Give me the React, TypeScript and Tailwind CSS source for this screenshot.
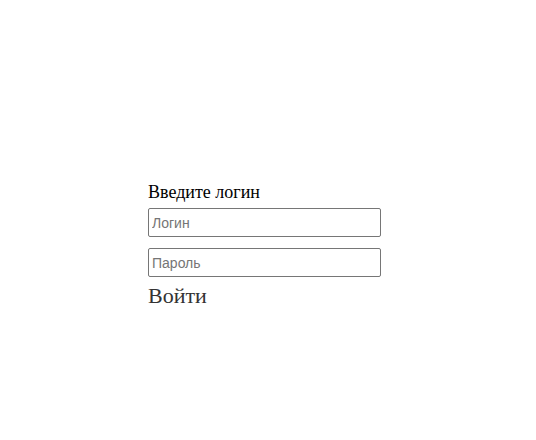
import React, { useState } from 'react';

export default function App() {
  const [login, setLogin] = useState('');
  const [password, setPassword] = useState('');

  return (
    <div className="min-h-[440px] w-full bg-white">
      <form
        className="ml-[148px] pt-[181px] flex flex-col w-[233px]"
        onSubmit={(e) => e.preventDefault()}
      >
        <label className="text-[18px] leading-[22px] text-black font-['Liberation_Serif',serif]">
          Введите логин
        </label>
        <input
          value={login}
          onChange={(e) => setLogin(e.target.value)}
          placeholder="Логин"
          className="mt-[5px] h-[29px] w-[233px] px-[3px] border border-[#767676] rounded-[2px] text-[14px] font-['Liberation_Sans',Arial,sans-serif] placeholder:text-[#757575] outline-none"
        />
        <input
          type="password"
          value={password}
          onChange={(e) => setPassword(e.target.value)}
          placeholder="Пароль"
          className="mt-[11px] h-[29px] w-[233px] px-[3px] border border-[#767676] rounded-[2px] text-[14px] font-['Liberation_Sans',Arial,sans-serif] placeholder:text-[#757575] outline-none"
        />
        <button
          type="submit"
          className="self-start mt-[6px] text-[22px] leading-[26px] text-[#333333] font-['Liberation_Serif',serif] cursor-pointer"
        >
          Войти
        </button>
      </form>
    </div>
  );
}
